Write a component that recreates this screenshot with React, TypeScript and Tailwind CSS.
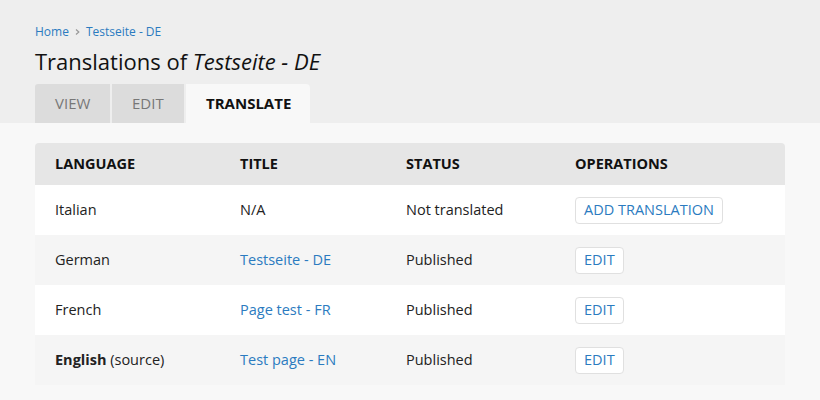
import React from "react";

const rows = [
  { lang: "Italian", source: false, title: "N/A", link: false, status: "Not translated", op: "ADD TRANSLATION" },
  { lang: "German", source: false, title: "Testseite - DE", link: true, status: "Published", op: "EDIT" },
  { lang: "French", source: false, title: "Page test - FR", link: true, status: "Published", op: "EDIT" },
  { lang: "English", source: true, title: "Test page - EN", link: true, status: "Published", op: "EDIT" },
];

export default function App() {
  return (
    <div className="w-[820px] h-[400px] overflow-hidden bg-[#f8f8f8] text-[#222] font-['Open_Sans',sans-serif]">
      <div className="bg-[#eeeeee] pt-[23px] px-[35px]">
        <div className="flex items-center gap-[4px] text-[12px] leading-[18px] text-[#2b7bc0]">
          <span>Home</span>
          <svg width="7" height="8" viewBox="0 0 7 8" className="mx-[1px]">
            <path d="M2 1.5 L4.8 4 L2 6.5" fill="none" stroke="#999" strokeWidth="1.2" />
          </svg>
          <span>Testseite - DE</span>
        </div>
        <h1 className="mt-[5px] text-[22px] leading-[30px] text-[#111] font-normal">
          Translations of <em>Testseite - DE</em>
        </h1>
        <div className="mt-[8px] flex gap-[2px] h-[39px] text-[15px]">
          <div className="w-[75px] bg-[#dcdcdc] rounded-tl-[3px] flex items-center pl-[20px] text-[#777]">VIEW</div>
          <div className="w-[72px] bg-[#dcdcdc] flex items-center pl-[20px] text-[#777]">EDIT</div>
          <div className="w-[124px] bg-[#f8f8f8] rounded-tr-[4px] flex items-center pl-[20px] font-bold text-[#111]">TRANSLATE</div>
        </div>
      </div>
      <div className="px-[35px] pt-[20px]">
        <table className="w-[750px] border-collapse text-[14.5px] text-left">
          <thead>
            <tr className="bg-[#e6e6e6] h-[42px]">
              <th className="w-[185px] pl-[20px] font-bold text-[#111] rounded-tl-[4px]">LANGUAGE</th>
              <th className="w-[166px] pl-[20px] font-bold text-[#111]">TITLE</th>
              <th className="w-[169px] pl-[20px] font-bold text-[#111]">STATUS</th>
              <th className="pl-[20px] font-bold text-[#111] rounded-tr-[4px]">OPERATIONS</th>
            </tr>
          </thead>
          <tbody>
            {rows.map((r, i) => (
              <tr key={r.lang} className={`h-[50px] ${i % 2 === 0 ? "bg-white" : "bg-[#f5f5f5]"}`}>
                <td className="pl-[20px]">
                  {r.source ? (
                    <>
                      <span className="font-bold">{r.lang}</span> (source)
                    </>
                  ) : (
                    r.lang
                  )}
                </td>
                <td className={`pl-[20px] ${r.link ? "text-[#2b7bc0]" : ""}`}>{r.title}</td>
                <td className="pl-[20px]">{r.status}</td>
                <td className="pl-[20px]">
                  <span className="inline-flex items-center h-[27px] px-[8px] bg-white border border-[#e0e0e0] rounded-[4px] text-[#2b7bc0]">
                    {r.op}
                  </span>
                </td>
              </tr>
            ))}
          </tbody>
        </table>
      </div>
    </div>
  );
}
